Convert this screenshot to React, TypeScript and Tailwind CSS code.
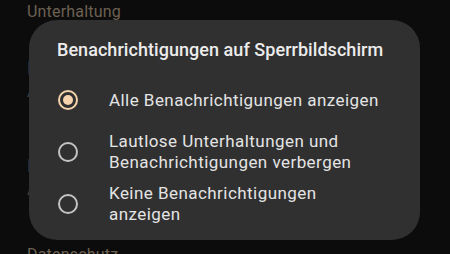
import { useState } from 'react';

const options = [
  { id: 'all', label: ['Alle Benachrichtigungen anzeigen'] },
  { id: 'silent', label: ['Lautlose Unterhaltungen und', 'Benachrichtigungen verbergen'] },
  { id: 'none', label: ['Keine Benachrichtigungen', 'anzeigen'] },
];

function Radio({ checked }: { checked: boolean }) {
  if (checked) {
    return (
      <span className="flex h-[20px] w-[20px] items-center justify-center rounded-full border-2 border-[#f6d3ae]">
        <span className="h-[10px] w-[10px] rounded-full bg-[#f6d3ae]" />
      </span>
    );
  }
  return <span className="block h-[20px] w-[20px] rounded-full border-2 border-[#c4c4c4]" />;
}

export default function App() {
  const [selected, setSelected] = useState('all');

  return (
    <div
      className="relative h-[254px] w-[450px] overflow-hidden bg-[#0c0c0c]"
      style={{ fontFamily: 'Roboto, "Noto Sans", sans-serif' }}
    >
      {/* Settings list behind the dialog (dimmed by scrim) */}
      <div className="flex flex-col pl-[27px]">
        <p className="pt-[1px] text-[16px] leading-[21px] tracking-[0.2px] text-[#6d6152]">Unterhaltung</p>
        <div className="mt-[34px] flex flex-col">
          <p className="text-[19px] leading-[24px] text-[#4a4a4a]">Benachrichtigungen</p>
          <p className="mt-[2px] text-[15px] leading-[20px] text-[#3e3e3e]">Alle</p>
        </div>
        <div className="mt-[52px] flex flex-col">
          <p className="text-[19px] leading-[24px] text-[#4a4a4a]">Benachrichtigungen</p>
          <p className="mt-[2px] text-[15px] leading-[20px] text-[#3e3e3e]">Aus</p>
        </div>
        <p className="mt-[44px] text-[16px] leading-[21px] tracking-[0.2px] text-[#6d6152]">Datenschutz</p>
      </div>

      {/* Dialog */}
      <div className="absolute left-[29px] top-[20px] flex h-[220px] w-[391px] flex-col rounded-[28px] bg-[#303030] pl-[28px] pt-[18px]">
        <h2 className="text-[18px] font-medium leading-[24px] tracking-[0.05px] text-[#ececec]">
          Benachrichtigungen auf Sperrbildschirm
        </h2>
        <div className="mt-[12px] flex flex-col">
          {options.map((o) => (
            <button
              key={o.id}
              onClick={() => setSelected(o.id)}
              className="flex min-h-[52px] items-center text-left"
            >
              <span className="ml-[1px] shrink-0">
                <Radio checked={selected === o.id} />
              </span>
              <span className="ml-[31px] flex flex-col text-[17px] leading-[21px] tracking-[0.45px] text-[#e4e4e4]">
                {o.label.map((l) => (
                  <span key={l}>{l}</span>
                ))}
              </span>
            </button>
          ))}
        </div>
      </div>
    </div>
  );
}
